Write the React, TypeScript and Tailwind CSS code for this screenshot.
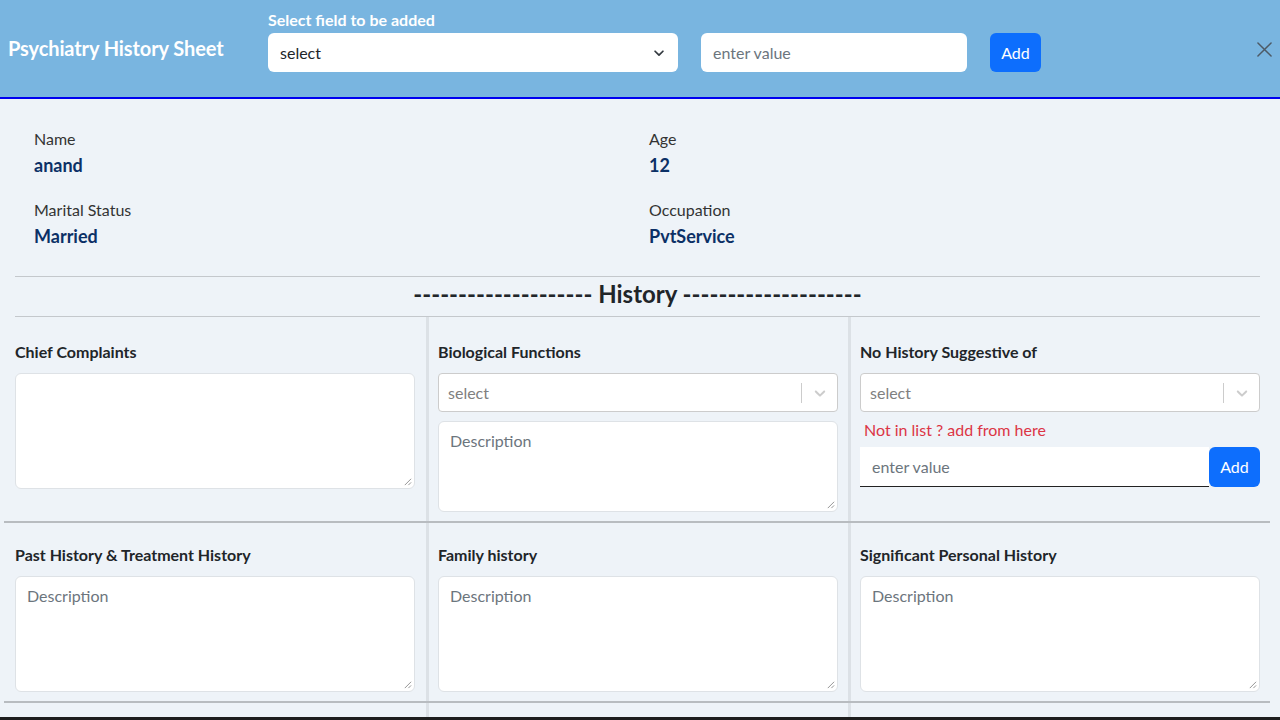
import React from "react";

const ChevronDown = ({ className }: { className?: string }) => (
  <svg viewBox="0 0 16 16" className={className} fill="none" stroke="currentColor" strokeWidth="2" strokeLinecap="round" strokeLinejoin="round">
    <path d="M3.5 6 8 10.5 12.5 6" />
  </svg>
);

const SelectBox = () => (
  <div className="h-[39px] w-full bg-white border border-[#cccccc] rounded-[4px] flex items-center">
    <span className="flex-1 pl-[9px] text-[16px] text-[#808080]">select</span>
    <span className="w-px h-[20px] bg-[#cccccc]" />
    <span className="w-[35px] flex items-center justify-center text-[#cccccc]">
      <svg viewBox="0 0 20 20" className="w-[18px] h-[18px]" fill="currentColor">
        <path d="M4.516 7.548c0.436-0.446 1.043-0.481 1.576 0l3.908 3.747 3.908-3.747c0.533-0.481 1.141-0.446 1.574 0 0.436 0.445 0.408 1.197 0 1.615-0.406 0.418-4.695 4.502-4.695 4.502-0.217 0.223-0.502 0.335-0.787 0.335s-0.57-0.112-0.789-0.335c0 0-4.287-4.084-4.695-4.502s-0.436-1.17 0-1.615z" />
      </svg>
    </span>
  </div>
);

const TextArea = ({ h, placeholder }: { h: string; placeholder?: string }) => (
  <div className={`relative w-full bg-white border border-[#dee2e6] rounded-[6px] ${h}`}>
    {placeholder && (
      <span className="absolute left-[11px] top-[7px] text-[16px] leading-[24px] text-[#6c757d]">{placeholder}</span>
    )}
    <svg viewBox="0 0 10 10" className="absolute right-[2px] bottom-[2px] w-[9px] h-[9px]" stroke="#8a8a8a" strokeWidth="1">
      <path d="M9 2 2 9M9 6 6 9" />
    </svg>
  </div>
);

const Heading = ({ children }: { children: React.ReactNode }) => (
  <div className="h-[24px] leading-[24px] text-[16px] font-bold text-[#212529] mb-[9px]">{children}</div>
);

export default function App() {
  return (
    <div className="w-[1280px] h-[720px] overflow-hidden bg-[#eef3f8] flex flex-col font-['Lato',sans-serif]">
      {/* Header */}
      <div className="h-[99px] shrink-0 bg-[#79b5e0] border-b-2 border-[#0000f0] flex items-start pt-[10px] relative">
        <div className="w-[268px] self-center pl-[8px] -mt-[11px] text-[20px] font-bold text-white tracking-[-0.1px]">Psychiatry History Sheet</div>
        <div className="flex flex-col">
          <div className="h-[20px] leading-[20px] text-[16px] font-bold text-white mb-[3px]">Select field to be added</div>
          <div className="flex items-center">
            <div className="w-[410px] h-[39px] bg-white rounded-[6px] flex items-center pl-[12px] pr-[12px]">
              <span className="flex-1 text-[16px] text-[#212529]">select</span>
              <ChevronDown className="w-[14px] h-[14px] text-[#343a40]" />
            </div>
            <div className="ml-[23px] w-[266px] h-[39px] bg-white rounded-[6px] flex items-center pl-[12px] text-[16px] text-[#6c757d]">enter value</div>
            <div className="ml-[23px] w-[51px] h-[39px] bg-[#0d6efd] rounded-[6px] flex items-center justify-center text-[16px] text-white">Add</div>
          </div>
        </div>
        <svg viewBox="0 0 16 16" className="absolute left-[1257px] top-[42px] w-[15px] h-[15px]" stroke="#4d5a66" strokeWidth="1.6" strokeLinecap="round">
          <path d="M1 1 15 15M15 1 1 15" />
        </svg>
      </div>

      {/* Info */}
      <div className="pt-[29px] pl-[34px] grid grid-cols-[615px_1fr]">
        <div>
          <div className="h-[22px] leading-[22px] text-[16px] text-[#333333]">Name</div>
          <div className="h-[26px] leading-[26px] text-[18px] font-bold text-[#0b3066] mt-[2px]">anand</div>
          <div className="h-[22px] leading-[22px] text-[16px] text-[#333333] mt-[21px]">Marital Status</div>
          <div className="h-[26px] leading-[26px] text-[18px] font-bold text-[#0b3066] mt-[2px]">Married</div>
        </div>
        <div>
          <div className="h-[22px] leading-[22px] text-[16px] text-[#333333]">Age</div>
          <div className="h-[26px] leading-[26px] text-[18px] font-bold text-[#0b3066] mt-[2px]">12</div>
          <div className="h-[22px] leading-[22px] text-[16px] text-[#333333] mt-[21px]">Occupation</div>
          <div className="h-[26px] leading-[26px] text-[18px] font-bold text-[#0b3066] mt-[2px]">PvtService</div>
        </div>
      </div>

      <div className="mt-[27px] ml-[15px] w-[1245px] h-px bg-[#c4c8cc]" />
      <div className="ml-[15px] w-[1245px] h-[39px] pb-[6px] flex items-center justify-center text-[24px] font-bold text-[#212529]">
        -------------------- History --------------------
      </div>
      <div className="ml-[15px] w-[1245px] h-px bg-[#c4c8cc]" />

      {/* Row 1 */}
      <div className="ml-[4px] w-[1266px] grid grid-cols-3 border-b-2 border-[#b8bcc0]">
        <div className="pt-[23px] pl-[11px] pr-[11px] pb-[9px]">
          <Heading>Chief Complaints</Heading>
          <TextArea h="h-[116px]" />
        </div>
        <div className="pt-[23px] pl-[9px] pr-[10px] pb-[9px] border-l-[3px] border-[#dce1e6]">
          <Heading>Biological Functions</Heading>
          <SelectBox />
          <div className="mt-[9px]">
            <TextArea h="h-[91px]" placeholder="Description" />
          </div>
        </div>
        <div className="pt-[23px] pl-[9px] pr-[10px] pb-[9px] border-l-[3px] border-[#dce1e6]">
          <Heading>No History Suggestive of</Heading>
          <SelectBox />
          <div className="mt-[8px] h-[20px] leading-[20px] pl-[4px] text-[16px] text-[#dc3545]">Not in list ? add from here</div>
          <div className="mt-[7px] flex h-[40px]">
            <div className="flex-1 bg-white border-b border-[#222222] flex items-center pl-[12px] text-[16px] text-[#6c757d]">enter value</div>
            <div className="w-[51px] bg-[#0d6efd] rounded-[6px] flex items-center justify-center text-[16px] text-white">Add</div>
          </div>
        </div>
      </div>

      {/* Row 2 */}
      <div className="ml-[4px] w-[1266px] grid grid-cols-3 border-b-2 border-[#b8bcc0]">
        <div className="pt-[20px] pl-[11px] pr-[11px] pb-[9px]">
          <Heading>Past History &amp; Treatment History</Heading>
          <TextArea h="h-[116px]" placeholder="Description" />
        </div>
        <div className="pt-[20px] pl-[9px] pr-[10px] pb-[9px] border-l-[3px] border-[#dce1e6]">
          <Heading>Family history</Heading>
          <TextArea h="h-[116px]" placeholder="Description" />
        </div>
        <div className="pt-[20px] pl-[9px] pr-[10px] pb-[9px] border-l-[3px] border-[#dce1e6]">
          <Heading>Significant Personal History</Heading>
          <TextArea h="h-[116px]" placeholder="Description" />
        </div>
      </div>

      {/* Row 3 stub */}
      <div className="ml-[4px] w-[1266px] grid grid-cols-3 flex-1">
        <div />
        <div className="border-l-[3px] border-[#dce1e6]" />
        <div className="border-l-[3px] border-[#dce1e6]" />
      </div>
      <div className="h-[3px] shrink-0 bg-[#1e1e1e]" />
    </div>
  );
}
